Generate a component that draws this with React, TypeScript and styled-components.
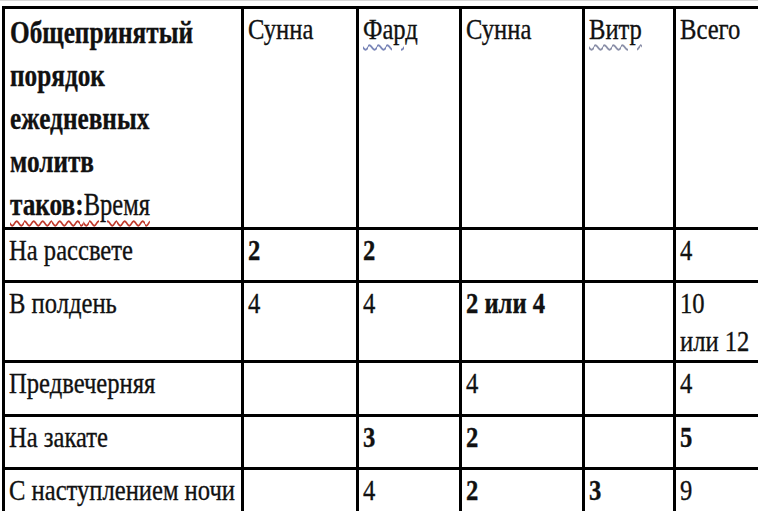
import React from 'react'
import styled, { createGlobalStyle } from 'styled-components'

const GlobalStyle = createGlobalStyle`
html, body {
  margin: 0;
  padding: 0;
  background: #ffffff;
  overflow: hidden;
}
`

type Cell = { text?: string; lines?: string[]; bold?: boolean }
type Row = { label: string; height: number; cells: Cell[] }

const rows: Row[] = [
  { label: 'На рассвете', height: 53, cells: [{ text: '2', bold: true }, { text: '2', bold: true }, {}, {}, { text: '4' }] },
  { label: 'В полдень', height: 75, cells: [{ text: '4' }, { text: '4' }, { text: '2 или 4', bold: true }, {}, { lines: ['10', 'или 12'] }] },
  { label: 'Предвечерняя', height: 54, cells: [{}, {}, { text: '4' }, {}, { text: '4' }] },
  { label: 'На закате', height: 53, cells: [{}, { text: '3', bold: true }, { text: '2', bold: true }, {}, { text: '5', bold: true }] },
  { label: 'С наступлением ночи', height: 53, cells: [{}, { text: '4' }, { text: '2', bold: true }, { text: '3', bold: true }, { text: '9' }] },
]

const colWidths = [239, 115, 103, 123, 91, 120]

const App = () => {
  return (
    <Page>
      <GlobalStyle />
      <Table>
        <colgroup>
          {colWidths.map((w, i) => (
            <col key={i} style={{ width: w }} />
          ))}
        </colgroup>
        <tbody>
          <HeadRow>
            <HeadCell>
              <Squeeze $scale={0.79}>
                <div>Общепринятый</div>
                <div>порядок</div>
                <div>ежедневных</div>
                <div>молитв</div>
                <div>
                  <Spell $color="#c0392b">
                    таков:<Plain>Время</Plain>
                  </Spell>
                </div>
              </Squeeze>
            </HeadCell>
            <Cell>
              <Squeeze>Сунна</Squeeze>
            </Cell>
            <Cell>
              <Squeeze>
                <Spell $color="#7a86b8">Фард</Spell>
              </Squeeze>
            </Cell>
            <Cell>
              <Squeeze>Сунна</Squeeze>
            </Cell>
            <Cell>
              <Squeeze>
                <Spell $color="#8a8fa8">Витр</Spell>
              </Squeeze>
            </Cell>
            <Cell>
              <Squeeze>Всего</Squeeze>
            </Cell>
          </HeadRow>
          {rows.map((r) => (
            <tr key={r.label} style={{ height: r.height }}>
              <Cell>
                <Squeeze>{r.label}</Squeeze>
              </Cell>
              {r.cells.map((c, i) => (
                <Cell key={i} $bold={c.bold}>
                  {c.text && <Squeeze>{c.text}</Squeeze>}
                  {c.lines && (
                    <Lines>
                      {c.lines.map((l) => (
                        <div key={l}>{l}</div>
                      ))}
                    </Lines>
                  )}
                </Cell>
              ))}
            </tr>
          ))}
        </tbody>
      </Table>
    </Page>
  )
}

export default App

const Page = styled.div`
width: 758px;
height: 511px;
overflow: hidden;
border-top: 1px solid #d8d8d8;
box-sizing: border-box;
padding: 5px 0 0 2px;
`
const Table = styled.table`
border-collapse: collapse;
table-layout: fixed;
width: 791px;
border: 3px solid #000;
font-family: "Liberation Serif", "Times New Roman", serif;
color: #111;
-webkit-text-stroke: 0.35px #111;
`
const HeadRow = styled.tr`
height: 221px;
`
const Cell = styled.td<{ $bold?: boolean }>`
border: 3px solid #000;
vertical-align: top;
padding: 1px 4px 0 4px;
font-size: 30px;
line-height: 38px;
font-weight: ${(p) => (p.$bold ? 700 : 400)};
overflow: hidden;
`
const HeadCell = styled(Cell)`
font-size: 32px;
line-height: 43px;
font-weight: 700;
padding-top: 2px;
padding-left: 5px;
`
const Squeeze = styled.div<{ $scale?: number }>`
display: inline-block;
white-space: nowrap;
transform: scaleX(${(p) => p.$scale ?? 0.82});
transform-origin: left top;
`
const Lines = styled(Squeeze)`
margin-bottom: -10px;
`
const Plain = styled.span`
font-weight: 400;
font-size: 31px;
-webkit-text-stroke: 0.35px #111;
`
const Spell = styled.span<{ $color: string }>`
text-decoration: underline wavy ${(p) => p.$color};
text-decoration-thickness: 1.5px;
text-underline-offset: 5px;
`
